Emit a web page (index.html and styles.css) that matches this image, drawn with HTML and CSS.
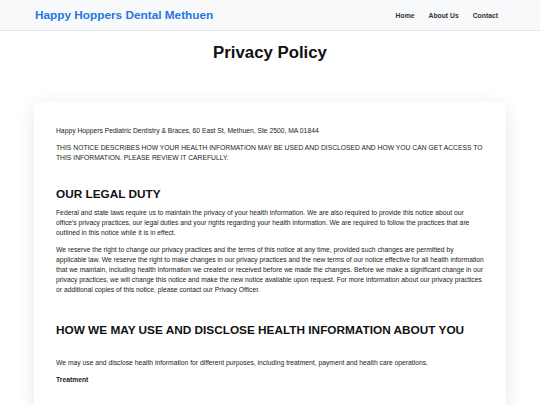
FILE: index.html
```html
<!DOCTYPE html>
<html lang="en">
<head>
    <meta charset="UTF-8">
    <title>Privacy Policy - Happy Hoppers Dental Methuen</title>
    <meta name="viewport" content="width=device-width, initial-scale=1">
    <link rel="stylesheet" href="styles.css">
</head>
<body>
    <header class="site-header">
        <div class="header-inner">
            <a class="brand" href="#">Happy Hoppers Dental Methuen</a>
            <nav class="nav">
                <a href="#">Home</a>
                <a href="#">About Us</a>
                <a href="#">Contact</a>
            </nav>
        </div>
    </header>

    <main class="page">
        <h1 class="page-title">Privacy Policy</h1>

        <section class="card">
            <p>Happy Hoppers Pediatric Dentistry &amp; Braces, 60 East St, Methuen, Ste 2500, MA 01844</p>
            <p>THIS NOTICE DESCRIBES HOW YOUR HEALTH INFORMATION MAY BE USED AND DISCLOSED AND HOW YOU CAN GET ACCESS TO THIS INFORMATION. PLEASE REVIEW IT CAREFULLY.</p>

            <h2 class="duty">OUR LEGAL DUTY</h2>
            <p>Federal and state laws require us to maintain the privacy of your health information. We are also required to provide this notice about our office's privacy practices, our legal duties and your rights regarding your health information. We are required to follow the practices that are outlined in this notice while it is in effect.</p>
            <p>We reserve the right to change our privacy practices and the terms of this notice at any time, provided such changes are permitted by applicable law. We reserve the right to make changes in our privacy practices and the new terms of our notice effective for all health information that we maintain, including health information we created or received before we made the changes. Before we make a significant change in our privacy practices, we will change this notice and make the new notice available upon request. For more information about our privacy practices or additional copies of this notice, please contact our Privacy Officer.</p>

            <h2 class="uses">HOW WE MAY USE AND DISCLOSE HEALTH INFORMATION ABOUT YOU</h2>
            <p>We may use and disclose health information for different purposes, including treatment, payment and health care operations.</p>
            <p class="label">Treatment</p>
        </section>
    </main>
</body>
</html>
```

FILE: styles.css
```css
body { margin: 0; font-family: "Liberation Sans", Arial, sans-serif; background: #fff; color: #222; }
a { text-decoration: none; }

.site-header { background: #f8f9fb; border-bottom: 1px solid #e4e6ea; }
.header-inner { width: 472px; margin: 0 auto; height: 30px; display: flex; align-items: center; justify-content: space-between; }
.brand { margin-left: 1px; font-size: 11.8px; font-weight: bold; color: #1f78e0; }
.nav { display: flex; gap: 14px; margin-right: 8px; }
.nav a { font-size: 6.8px; font-weight: bold; color: #333; }

.page { width: 472px; margin: 0 auto; }
.page-title { margin: 11px 0 0; text-align: center; font-size: 16.8px; line-height: 22px; color: #111; }

.card { margin-top: 38px; background: #fff; border-radius: 8px; box-shadow: 0 4px 18px rgba(0, 0, 0, 0.1); padding: 24px 22px 20px; }
.card p { margin: 0 0 7px; font-size: 6.75px; line-height: 10px; color: #222; }
.card h2 { font-size: 11.8px; color: #111; }
.card h2.duty { margin: 24px 0 6px; line-height: 15px; }
.card h2.uses { margin: 27px 0 20px; line-height: 16px; white-space: nowrap; }
.card .label { font-weight: bold; }
```
